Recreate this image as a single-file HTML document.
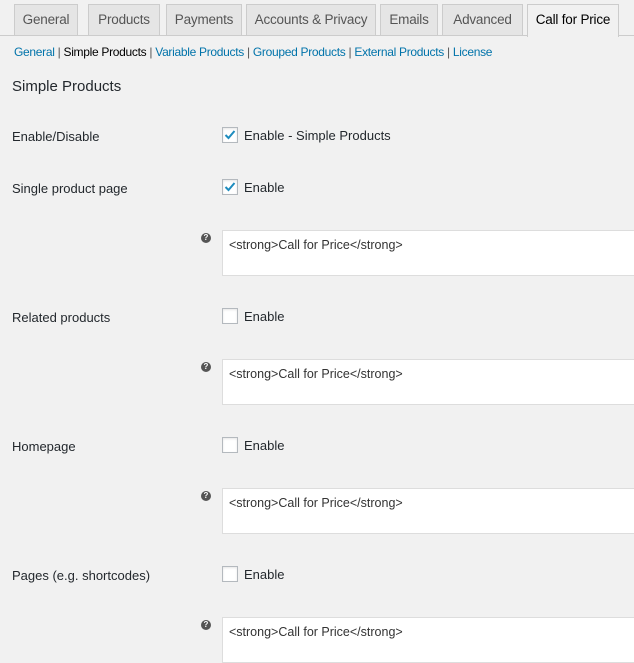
<!DOCTYPE html>
<html><head><style>
body{margin:0;background:#f1f1f1;font-family:"Liberation Sans",sans-serif;color:#23282d;width:634px;height:659px;overflow:hidden;position:relative;font-size:13px}
.a{position:absolute}
.tabs{left:0;top:0;width:634px;height:35px;border-bottom:1px solid #ccc}
.tab{position:absolute;top:4px;height:30px;background:#e5e5e5;border:1px solid #ccc;border-bottom:none;font-size:13.5px;color:#555;line-height:30px;text-align:center;letter-spacing:-0.2px}
.tab.on{background:#f1f1f1;color:#000;height:32px}
.sub{left:14px;top:45px;font-size:12px;color:#555;letter-spacing:-0.3px}
.sub a{color:#0073aa;text-decoration:none}
.sub b{color:#000;font-weight:normal}
.lbl{left:12px;font-size:13px;color:#23282d;font-weight:normal}
.cb{width:14px;height:14px;border:1px solid #b4b9be;background:#fff;box-shadow:inset 0 1px 2px rgba(0,0,0,.1)}
.ck{font-size:13px;color:#23282d}
.ta{left:222px;width:420px;height:46px;background:#fff;border:1px solid #ddd;font-size:12.5px;color:#333;box-sizing:border-box;padding:7px 6px}
.q{left:201px;width:10px;height:10px;border-radius:50%;background:#555;color:#fff;font-size:8px;line-height:10px;text-align:center;font-weight:bold}
</style></head><body>
<div class="a tabs"></div>
<div class="tab" style="left:14px;width:62px">General</div>
<div class="tab" style="left:88px;width:70px">Products</div>
<div class="tab" style="left:166px;width:74px">Payments</div>
<div class="tab" style="left:246px;width:128px">Accounts &amp; Privacy</div>
<div class="tab" style="left:380px;width:56px">Emails</div>
<div class="tab" style="left:442px;width:79px">Advanced</div>
<div class="tab on" style="left:527px;width:90px">Call for Price</div>
<div class="a sub"><a>General</a> | <b>Simple Products</b> | <a>Variable Products</a> | <a>Grouped Products</a> | <a>External Products</a> | <a>License</a></div>
<div class="a" style="left:12px;top:78px;font-size:15px;color:#23282d">Simple Products</div>

<div class="a lbl" style="top:129px">Enable/Disable</div>
<div class="a cb" style="left:222px;top:127px"><svg width="14" height="14" viewBox="0 0 14 14"><path d="M2.5 7l3 3 6-7" stroke="#1e8cbe" stroke-width="2" fill="none"/></svg></div>
<div class="a ck" style="left:244px;top:128px">Enable - Simple Products</div>

<div class="a lbl" style="top:181px">Single product page</div>
<div class="a cb" style="left:222px;top:179px"><svg width="14" height="14" viewBox="0 0 14 14"><path d="M2.5 7l3 3 6-7" stroke="#1e8cbe" stroke-width="2" fill="none"/></svg></div>
<div class="a ck" style="left:244px;top:180px">Enable</div>
<div class="a q" style="top:233px">?</div>
<div class="a ta" style="top:230px">&lt;strong&gt;Call for Price&lt;/strong&gt;</div>

<div class="a lbl" style="top:310px">Related products</div>
<div class="a cb" style="left:222px;top:308px"></div>
<div class="a ck" style="left:244px;top:309px">Enable</div>
<div class="a q" style="top:362px">?</div>
<div class="a ta" style="top:359px">&lt;strong&gt;Call for Price&lt;/strong&gt;</div>

<div class="a lbl" style="top:439px">Homepage</div>
<div class="a cb" style="left:222px;top:437px"></div>
<div class="a ck" style="left:244px;top:438px">Enable</div>
<div class="a q" style="top:491px">?</div>
<div class="a ta" style="top:488px">&lt;strong&gt;Call for Price&lt;/strong&gt;</div>

<div class="a lbl" style="top:568px">Pages (e.g. shortcodes)</div>
<div class="a cb" style="left:222px;top:566px"></div>
<div class="a ck" style="left:244px;top:567px">Enable</div>
<div class="a q" style="top:620px">?</div>
<div class="a ta" style="top:617px">&lt;strong&gt;Call for Price&lt;/strong&gt;</div>
</body></html>
